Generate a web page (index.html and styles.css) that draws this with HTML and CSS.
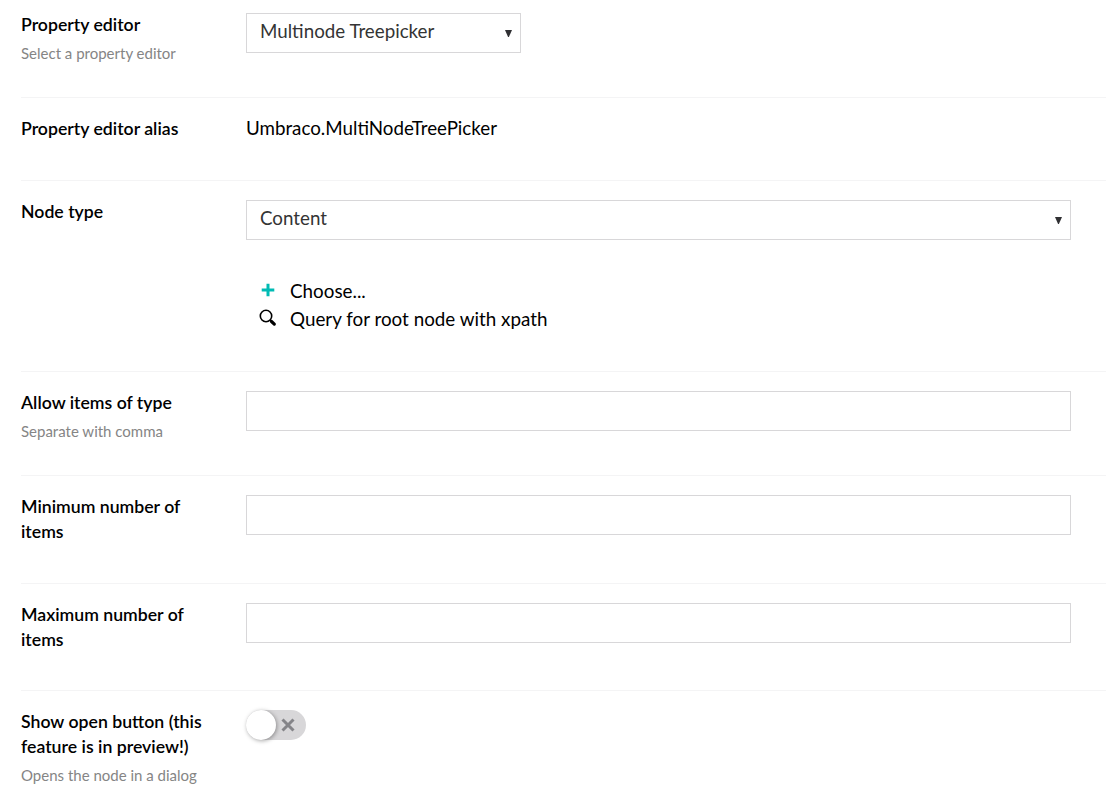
FILE: index.html
```html
<!DOCTYPE html>
<html lang="en">
<head>
<meta charset="utf-8">
<title>Data type editor</title>
<link rel="stylesheet" href="styles.css">
</head>
<body>
<main class="editor">
  <section class="row row-first">
    <div class="info"><div class="label">Property editor</div><div class="hint">Select a property editor</div></div>
    <div class="control"><div class="field select select-short"><span>Multinode Treepicker</span><svg class="caret" viewBox="0 0 7 7"><path d="M0 0h7L3.9 7h-.8z"/></svg></div></div>
  </section>
  <section class="row row-alias">
    <div class="info"><div class="label">Property editor alias</div></div>
    <div class="control value">Umbraco.MultiNodeTreePicker</div>
  </section>
  <section class="row row-node">
    <div class="info"><div class="label">Node type</div></div>
    <div class="control">
      <div class="field select"><span>Content</span><svg class="caret" viewBox="0 0 7 7"><path d="M0 0h7L3.9 7h-.8z"/></svg></div>
      <div class="actions">
        <div class="action"><svg class="icon" viewBox="0 0 18 18"><path d="M9 2.7v12.6M2.7 9h12.6" fill="none" stroke="#00bbb4" stroke-width="3"/></svg><span>Choose...</span></div>
        <div class="action"><svg class="icon" viewBox="0 0 18 18"><circle cx="7" cy="7" r="5.7" fill="none" stroke="#000" stroke-width="1.6"/><path d="M11 11l1.4 1.3" stroke="#000" stroke-width="2"/><path d="M12.5 12.5l2.8 2.6" stroke="#000" stroke-width="3.2" stroke-linecap="round"/></svg><span>Query for root node with xpath</span></div>
      </div>
    </div>
  </section>
  <section class="row row-allow">
    <div class="info"><div class="label">Allow items of type</div><div class="hint">Separate with comma</div></div>
    <div class="control"><div class="field"></div></div>
  </section>
  <section class="row row-min">
    <div class="info"><div class="label">Minimum number of items</div></div>
    <div class="control"><div class="field"></div></div>
  </section>
  <section class="row row-max">
    <div class="info"><div class="label">Maximum number of items</div></div>
    <div class="control"><div class="field"></div></div>
  </section>
  <section class="row row-open">
    <div class="info"><div class="label">Show open button (this feature is in preview!)</div><div class="hint">Opens the node in a dialog</div></div>
    <div class="control"><div class="toggle"><div class="knob"></div><svg class="cross" viewBox="0 0 14 14"><path d="M1.5 1.5l11 11M12.5 1.5l-11 11" stroke="#848488" stroke-width="3"/></svg></div></div>
  </section>
</main>
</body>
</html>
```
FILE: styles.css
```css
* { box-sizing: border-box; }
body {
  margin: 0;
  background: #fff;
  color: #000;
  font-family: Lato, "Liberation Sans", sans-serif;
  font-size: 18.75px;
  line-height: 25px;
  overflow: hidden;
}
.editor { margin-left: 21px; height: 804px; overflow: hidden; }
.row {
  display: flex;
  padding-top: 19px;
  border-bottom: 1px solid #f4f4f5;
}
.row-first { height: 98px; padding-top: 13px; }
.row-alias { height: 83px; }
.row-node { height: 191px; }
.row-allow { height: 104px; }
.row-min { height: 108px; }
.row-max { height: 107px; }
.row-open { border-bottom: 0; }
.info { width: 200px; margin: -1px 25px 0 0; flex: none; }
.label { font-size: 17.68px; font-weight: 600; width: 190px; }
.hint { font-size: 15px; line-height: 20px; margin-top: 6px; color: #858585; }
.control { flex: 1; margin-right: 35px; }
.value { margin-top: -2px; }
.field { height: 40px; border: 1px solid #d8d7d9; }
.select {
  display: flex;
  align-items: center;
  justify-content: space-between;
  padding: 0 8px 6px 13px;
  color: #343434;
}
.select-short { width: 275px; }
.caret { width: 7px; height: 7px; margin-top: 6px; fill: #303033; }
.actions { margin: 38px 0 0 13px; }
.action { display: flex; height: 28px; line-height: 25px; font-size: 18.82px; }
.icon { width: 18px; height: 18px; margin: 3px 13px 0 0; }
.toggle {
  display: flex;
  align-items: center;
  width: 60px;
  height: 30px;
  border-radius: 15px;
  background: #d8d7d9;
}
.knob {
  width: 30px;
  height: 30px;
  border-radius: 50%;
  background: #fff;
  box-shadow: 1px 1px 4px rgba(0,0,0,.35);
}
.cross { width: 14px; height: 14px; margin-left: 5px; }
```
